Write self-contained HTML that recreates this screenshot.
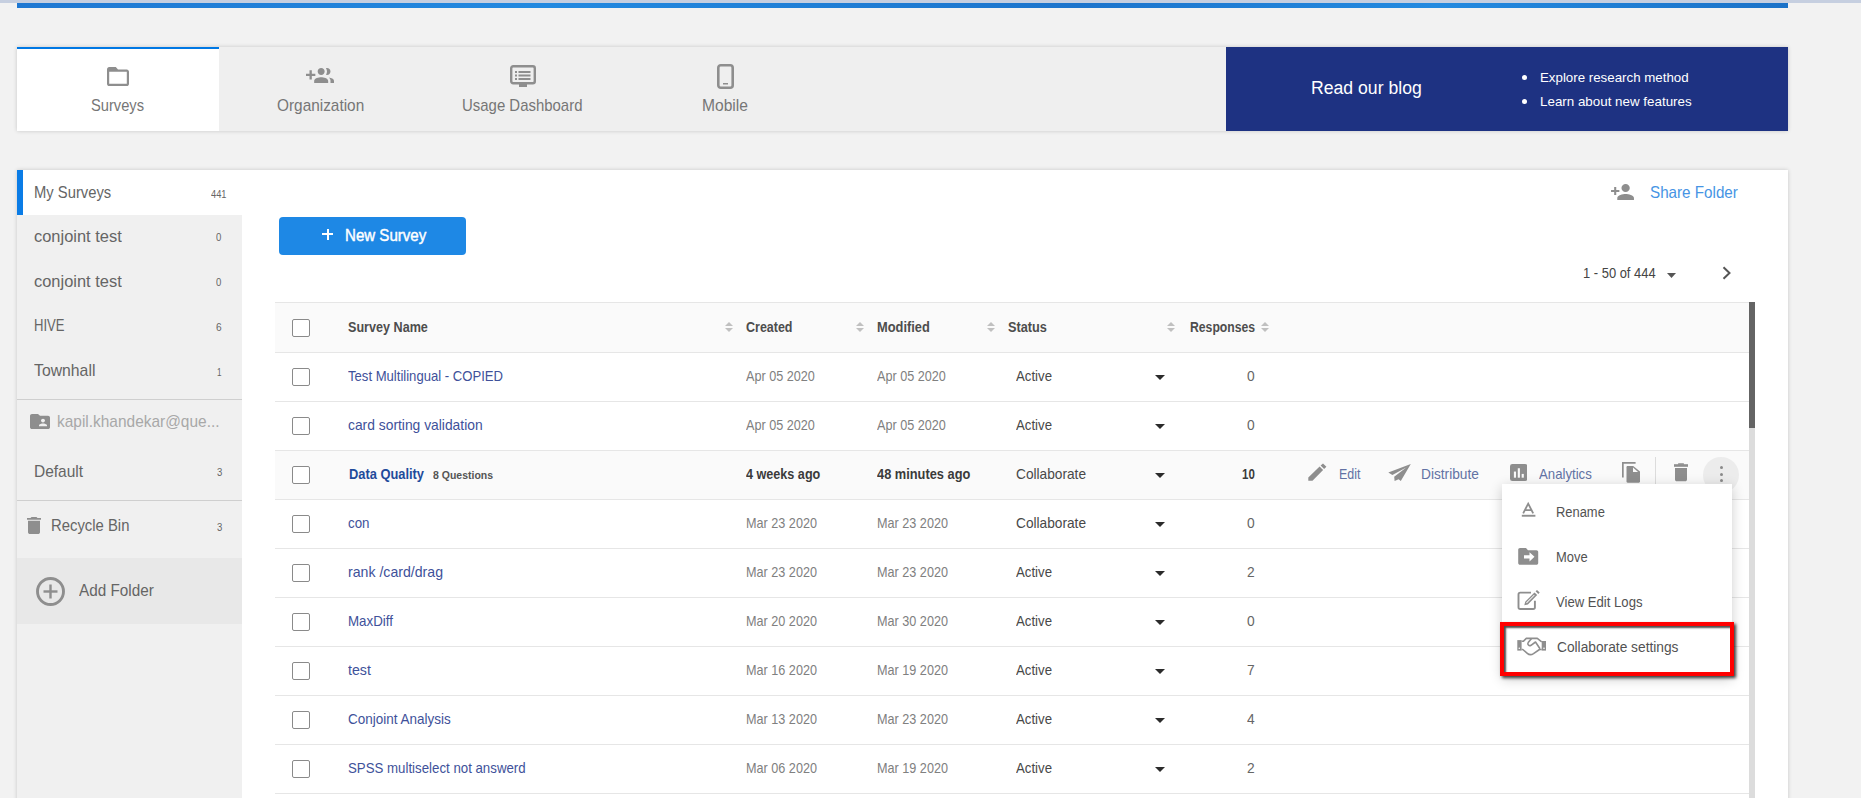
<!DOCTYPE html>
<html><head><meta charset="utf-8"><style>
html,body{margin:0;padding:0;width:1861px;height:798px;overflow:hidden;background:#f2f2f2;font-family:"Liberation Sans",sans-serif}
.t{position:absolute;white-space:nowrap;transform-origin:0 0}
svg{display:block}
</style></head><body>
<div style="position:absolute;left:0px;top:0px;width:1861px;height:3px;background:#c6cfe0"></div>
<div style="position:absolute;left:17px;top:3px;width:1771px;height:5px;background:linear-gradient(90deg,#1f78d2,#2289e0 30%,#1c74cc 60%,#238ae0 80%,#1b72c8)"></div>
<div style="position:absolute;left:17px;top:47px;width:1771px;height:84px;background:#efefef;box-shadow:0 0 4px rgba(0,0,0,.18)"></div>
<div style="position:absolute;left:17px;top:47px;width:202px;height:84px;background:#fff"></div>
<div style="position:absolute;left:17px;top:47px;width:202px;height:2px;background:#0078e4"></div>
<div style="position:absolute;left:1226px;top:47px;width:562px;height:84px;background:#1e3282"></div>
<div style="position:absolute;left:17px;top:170px;width:1771px;height:660px;background:#fff;box-shadow:0 0 4px rgba(0,0,0,.18)"></div>
<div style="position:absolute;left:17px;top:170px;width:225px;height:660px;background:#f0f0f0"></div>
<div style="position:absolute;left:17px;top:170px;width:225px;height:45px;background:#fff"></div>
<div style="position:absolute;left:17px;top:170px;width:6px;height:45px;background:#0a7ce6"></div>
<div style="position:absolute;left:17px;top:399px;width:225px;height:1px;background:#cfcfcf"></div>
<div style="position:absolute;left:17px;top:500px;width:225px;height:1px;background:#cfcfcf"></div>
<div style="position:absolute;left:17px;top:558px;width:225px;height:66px;background:#e8e8e8"></div>
<svg style="position:absolute;left:107px;top:67px;" width="22" height="19" viewBox="2 4 20 16" preserveAspectRatio="none"><path fill="#8e8e8e" d="M20 6h-8l-2-2H4c-1.1 0-1.99.9-1.99 2L2 18c0 1.1.9 2 2 2h16c1.1 0 2-.9 2-2V8c0-1.1-.9-2-2-2zm0 12H4V8h16v10z"/></svg>
<svg style="position:absolute;left:306px;top:68px;" width="28" height="15" viewBox="0 5 24 13" preserveAspectRatio="none"><path fill="#8e8e8e" d="M8 10H5V7H3v3H0v2h3v3h2v-3h3v-2zm10 1c1.66 0 2.99-1.34 2.99-3S19.66 5 18 5c-.32 0-.63.05-.91.14.57.81.9 1.79.9 2.86s-.34 2.04-.9 2.86c.28.09.59.14.91.14zm-5 0c1.66 0 2.99-1.34 2.99-3S14.66 5 13 5c-1.66 0-3 1.34-3 3s1.34 3 3 3zm6.62 2.16c.83.73 1.38 1.66 1.38 2.84v2h3v-2c0-1.54-2.37-2.49-4.38-2.84zM13 13c-2 0-6 1-6 3v2h12v-2c0-2-4-3-6-3z"/></svg>
<svg style="position:absolute;left:510px;top:65px;" width="26" height="23" viewBox="0 0 26 23" preserveAspectRatio="none"><rect x="1.2" y="1.2" width="23.6" height="17" rx="2" fill="none" stroke="#8e8e8e" stroke-width="2.4"/><rect x="9" y="19" width="8" height="3" fill="#8e8e8e"/><rect x="5" y="6" width="2" height="2" fill="#8e8e8e"/><rect x="8.5" y="6" width="12" height="2" fill="#8e8e8e"/><rect x="5" y="9.5" width="2" height="2" fill="#8e8e8e"/><rect x="8.5" y="9.5" width="12" height="2" fill="#8e8e8e"/><rect x="5" y="13" width="2" height="2" fill="#8e8e8e"/><rect x="8.5" y="13" width="12" height="2" fill="#8e8e8e"/></svg>
<svg style="position:absolute;left:717px;top:64px;" width="17" height="25" viewBox="0 0 17 25" preserveAspectRatio="none"><rect x="1.3" y="1.3" width="14.4" height="22.4" rx="2.5" fill="none" stroke="#8e8e8e" stroke-width="2.6"/><rect x="6" y="19" width="5" height="1.5" fill="#8e8e8e"/></svg>
<div class="t" style="left:91.40px;top:96.00px;font-size:17px;line-height:19px;color:#767676;transform:scaleX(0.8632);">Surveys</div>
<div class="t" style="left:276.50px;top:96.00px;font-size:17px;line-height:19px;color:#767676;transform:scaleX(0.9046);">Organization</div>
<div class="t" style="left:462.00px;top:96.00px;font-size:17px;line-height:19px;color:#767676;transform:scaleX(0.8792);">Usage Dashboard</div>
<div class="t" style="left:702.00px;top:96.00px;font-size:17px;line-height:19px;color:#767676;transform:scaleX(0.9182);">Mobile</div>
<div class="t" style="left:1310.50px;top:78.00px;font-size:18px;line-height:20px;color:#fff;transform:scaleX(0.9797);">Read our blog</div>
<div class="t" style="left:1539.60px;top:70.00px;font-size:13px;line-height:15px;color:#fff;transform:scaleX(1.0231);">Explore research method</div>
<div class="t" style="left:1539.60px;top:94.00px;font-size:13px;line-height:15px;color:#fff;transform:scaleX(1.0288);">Learn about new features</div>
<div style="position:absolute;left:1522px;top:75px;width:5px;height:5px;background:#fff;border-radius:50%"></div>
<div style="position:absolute;left:1522px;top:99px;width:5px;height:5px;background:#fff;border-radius:50%"></div>
<div class="t" style="left:33.80px;top:183.30px;font-size:17px;line-height:19px;color:#656565;transform:scaleX(0.8694);">My Surveys</div>
<div class="t" style="left:211.30px;top:187.50px;font-size:11.5px;line-height:12px;color:#656565;transform:scaleX(0.8073);">441</div>
<div class="t" style="left:33.80px;top:227.00px;font-size:17px;line-height:19px;color:#656565;transform:scaleX(0.9669);">conjoint test</div>
<div class="t" style="left:216.20px;top:232.00px;font-size:10px;line-height:11px;color:#656565;transform:scaleX(0.9550);">0</div>
<div class="t" style="left:33.80px;top:272.00px;font-size:17px;line-height:19px;color:#656565;transform:scaleX(0.9669);">conjoint test</div>
<div class="t" style="left:216.20px;top:277.00px;font-size:10px;line-height:11px;color:#656565;transform:scaleX(0.9550);">0</div>
<div class="t" style="left:34.30px;top:316.10px;font-size:17px;line-height:19px;color:#656565;transform:scaleX(0.7683);">HIVE</div>
<div class="t" style="left:216.20px;top:321.50px;font-size:10px;line-height:11px;color:#656565;transform:scaleX(1.0090);">6</div>
<div class="t" style="left:33.80px;top:361.00px;font-size:17px;line-height:19px;color:#656565;transform:scaleX(0.9282);">Townhall</div>
<div class="t" style="left:216.50px;top:366.50px;font-size:10px;line-height:11px;color:#656565;transform:scaleX(0.8108);">1</div>
<svg style="position:absolute;left:29.5px;top:413px;" width="20" height="17" viewBox="2 3 20 18" preserveAspectRatio="none"><path fill="#8e8e8e" d="M20 6h-8l-2-2H4c-1.1 0-1.99.9-1.99 2L2 18c0 1.1.9 2 2 2h16c1.1 0 2-.9 2-2V8c0-1.1-.9-2-2-2zm-5 3c1.1 0 2 .9 2 2s-.9 2-2 2-2-.9-2-2 .9-2 2-2zm4 8h-8v-1c0-1.33 2.67-2 4-2s4 .67 4 2v1z"/></svg>
<div class="t" style="left:56.50px;top:412.20px;font-size:17px;line-height:19px;color:#a8a8a8;transform:scaleX(0.9086);">kapil.khandekar@que...</div>
<div class="t" style="left:34.40px;top:461.80px;font-size:17px;line-height:19px;color:#656565;transform:scaleX(0.9118);">Default</div>
<div class="t" style="left:216.50px;top:467.00px;font-size:10px;line-height:11px;color:#656565;transform:scaleX(0.9550);">3</div>
<svg style="position:absolute;left:25px;top:516px;" width="18" height="19" viewBox="3 2 18 20" preserveAspectRatio="none"><path fill="#8e8e8e" d="M6 19c0 1.1.9 2 2 2h8c1.1 0 2-.9 2-2V7H6v12zM19 4h-3.5l-1-1h-5l-1 1H5v2h14V4z"/></svg>
<div class="t" style="left:51.20px;top:515.70px;font-size:17px;line-height:19px;color:#656565;transform:scaleX(0.8735);">Recycle Bin</div>
<div class="t" style="left:216.50px;top:522.00px;font-size:10px;line-height:11px;color:#656565;transform:scaleX(0.9550);">3</div>
<svg style="position:absolute;left:36px;top:577px;" width="29" height="29" viewBox="0 0 29 29" preserveAspectRatio="none"><circle cx="14.5" cy="14.5" r="13" fill="none" stroke="#8e8e8e" stroke-width="2.9"/><rect x="13.3" y="7.5" width="2.4" height="14" fill="#8e8e8e"/><rect x="7.5" y="13.3" width="14" height="2.4" fill="#8e8e8e"/></svg>
<div class="t" style="left:79.00px;top:581.00px;font-size:17px;line-height:19px;color:#656565;transform:scaleX(0.8996);">Add Folder</div>
<svg style="position:absolute;left:1610px;top:183px;" width="25" height="18" viewBox="0 3 24 18" preserveAspectRatio="none"><path fill="#8e8e8e" d="M15 12c2.21 0 4-1.79 4-4s-1.79-4-4-4-4 1.79-4 4 1.79 4 4 4zm-9-2V7H4v3H1v2h3v3h2v-3h3v-2H6zm9 4c-2.67 0-8 1.34-8 4v2h16v-2c0-2.66-5.33-4-8-4z"/></svg>
<div class="t" style="left:1650.00px;top:182.80px;font-size:16.5px;line-height:18px;color:#4694e4;transform:scaleX(0.9214);">Share Folder</div>
<div style="position:absolute;left:279px;top:217px;width:187px;height:38px;background:#1e88e5;border-radius:4px"></div>
<div style="position:absolute;left:322px;top:233px;width:11px;height:2px;background:#fff"></div>
<div style="position:absolute;left:326.5px;top:228.5px;width:2px;height:11px;background:#fff"></div>
<div class="t" style="left:345.00px;top:226.00px;font-size:17px;line-height:19px;color:#fff;transform:scaleX(0.8871);-webkit-text-stroke:0.45px #fff;">New Survey</div>
<div class="t" style="left:1582.70px;top:264.60px;font-size:14px;line-height:16px;color:#444;transform:scaleX(0.9237);">1 - 50 of 444</div>
<svg style="position:absolute;left:1667px;top:273px;" width="9" height="5" viewBox="0 0 9 5" preserveAspectRatio="none"><path d="M0 0h9L4.5 5z" fill="#555"/></svg>
<svg style="position:absolute;left:1721px;top:266px;" width="12" height="14" viewBox="0 0 12 14" preserveAspectRatio="none"><path d="M2.5 1.2l6 5.8-6 5.8" fill="none" stroke="#555" stroke-width="2"/></svg>
<div style="position:absolute;left:275px;top:302px;width:1474px;height:50px;background:#fafafa;border-top:1px solid #e6e6e6;box-sizing:border-box"></div>
<div style="position:absolute;left:275px;top:352px;width:1474px;height:1px;background:#e6e6e6"></div>
<div style="position:absolute;left:275px;top:401px;width:1474px;height:1px;background:#e6e6e6"></div>
<div style="position:absolute;left:275px;top:450px;width:1474px;height:1px;background:#e6e6e6"></div>
<div style="position:absolute;left:275px;top:499px;width:1474px;height:1px;background:#e6e6e6"></div>
<div style="position:absolute;left:275px;top:548px;width:1474px;height:1px;background:#e6e6e6"></div>
<div style="position:absolute;left:275px;top:597px;width:1474px;height:1px;background:#e6e6e6"></div>
<div style="position:absolute;left:275px;top:646px;width:1474px;height:1px;background:#e6e6e6"></div>
<div style="position:absolute;left:275px;top:695px;width:1474px;height:1px;background:#e6e6e6"></div>
<div style="position:absolute;left:275px;top:744px;width:1474px;height:1px;background:#e6e6e6"></div>
<div style="position:absolute;left:275px;top:793px;width:1474px;height:1px;background:#e6e6e6"></div>
<div style="position:absolute;left:275px;top:451px;width:1474px;height:48px;background:#fafafa"></div>
<div style="position:absolute;left:1749px;top:302px;width:5.5px;height:500px;background:#dcdcdc"></div>
<div style="position:absolute;left:1749px;top:302px;width:5.5px;height:126px;background:#646464"></div>
<div style="position:absolute;left:292px;top:319px;width:18px;height:18px;border:1.4px solid #8a8a8a;border-radius:2px;box-sizing:border-box;background:#fff"></div>
<div class="t" style="left:348.00px;top:319.10px;font-size:14.5px;line-height:16px;color:#4d4d4d;font-weight:bold;transform:scaleX(0.8694);">Survey Name</div>
<div class="t" style="left:746.30px;top:319.10px;font-size:14.5px;line-height:16px;color:#4d4d4d;font-weight:bold;transform:scaleX(0.8611);">Created</div>
<div class="t" style="left:877.40px;top:319.10px;font-size:14.5px;line-height:16px;color:#4d4d4d;font-weight:bold;transform:scaleX(0.8859);">Modified</div>
<div class="t" style="left:1008.20px;top:319.10px;font-size:14.5px;line-height:16px;color:#4d4d4d;font-weight:bold;transform:scaleX(0.8781);">Status</div>
<div class="t" style="left:1189.60px;top:319.10px;font-size:14.5px;line-height:16px;color:#4d4d4d;font-weight:bold;transform:scaleX(0.8416);">Responses</div>
<svg style="position:absolute;left:725px;top:322px;" width="8" height="10" viewBox="0 0 8 10" preserveAspectRatio="none"><path d="M0 4L4 0 8 4z M0 6h8L4 10z" fill="#c0c0c0"/></svg>
<svg style="position:absolute;left:855.5px;top:322px;" width="8" height="10" viewBox="0 0 8 10" preserveAspectRatio="none"><path d="M0 4L4 0 8 4z M0 6h8L4 10z" fill="#c0c0c0"/></svg>
<svg style="position:absolute;left:986.5px;top:322px;" width="8" height="10" viewBox="0 0 8 10" preserveAspectRatio="none"><path d="M0 4L4 0 8 4z M0 6h8L4 10z" fill="#c0c0c0"/></svg>
<svg style="position:absolute;left:1166.7px;top:322px;" width="8" height="10" viewBox="0 0 8 10" preserveAspectRatio="none"><path d="M0 4L4 0 8 4z M0 6h8L4 10z" fill="#c0c0c0"/></svg>
<svg style="position:absolute;left:1260.8px;top:322px;" width="8" height="10" viewBox="0 0 8 10" preserveAspectRatio="none"><path d="M0 4L4 0 8 4z M0 6h8L4 10z" fill="#c0c0c0"/></svg>
<div style="position:absolute;left:292px;top:368px;width:18px;height:18px;border:1.4px solid #8a8a8a;border-radius:2px;box-sizing:border-box;background:#fff"></div>
<svg style="position:absolute;left:1155px;top:374.5px;" width="10" height="5" viewBox="0 0 10 5" preserveAspectRatio="none"><path d="M0 0h10L5 5z" fill="#2b2b2b"/></svg>
<div class="t" style="left:348.00px;top:367.00px;font-size:15px;line-height:17px;color:#40519a;transform:scaleX(0.8730);">Test Multilingual - COPIED</div>
<div class="t" style="left:746.30px;top:367.00px;font-size:15px;line-height:17px;color:#808080;transform:scaleX(0.8428);">Apr 05 2020</div>
<div class="t" style="left:877.40px;top:367.00px;font-size:15px;line-height:17px;color:#808080;transform:scaleX(0.8428);">Apr 05 2020</div>
<div class="t" style="left:1016.20px;top:367.00px;font-size:15px;line-height:17px;color:#484848;transform:scaleX(0.8813);">Active</div>
<div class="t" style="left:1246.72px;top:367.00px;font-size:15px;line-height:17px;color:#666;transform:scaleX(0.9200);">0</div>
<div style="position:absolute;left:292px;top:417px;width:18px;height:18px;border:1.4px solid #8a8a8a;border-radius:2px;box-sizing:border-box;background:#fff"></div>
<svg style="position:absolute;left:1155px;top:423.5px;" width="10" height="5" viewBox="0 0 10 5" preserveAspectRatio="none"><path d="M0 0h10L5 5z" fill="#2b2b2b"/></svg>
<div class="t" style="left:348.00px;top:416.00px;font-size:15px;line-height:17px;color:#40519a;transform:scaleX(0.9225);">card sorting validation</div>
<div class="t" style="left:746.30px;top:416.00px;font-size:15px;line-height:17px;color:#808080;transform:scaleX(0.8428);">Apr 05 2020</div>
<div class="t" style="left:877.40px;top:416.00px;font-size:15px;line-height:17px;color:#808080;transform:scaleX(0.8428);">Apr 05 2020</div>
<div class="t" style="left:1016.20px;top:416.00px;font-size:15px;line-height:17px;color:#484848;transform:scaleX(0.8813);">Active</div>
<div class="t" style="left:1246.72px;top:416.00px;font-size:15px;line-height:17px;color:#666;transform:scaleX(0.9200);">0</div>
<div style="position:absolute;left:292px;top:466px;width:18px;height:18px;border:1.4px solid #8a8a8a;border-radius:2px;box-sizing:border-box;background:#fff"></div>
<svg style="position:absolute;left:1155px;top:472.5px;" width="10" height="5" viewBox="0 0 10 5" preserveAspectRatio="none"><path d="M0 0h10L5 5z" fill="#2b2b2b"/></svg>
<div style="position:absolute;left:292px;top:515px;width:18px;height:18px;border:1.4px solid #8a8a8a;border-radius:2px;box-sizing:border-box;background:#fff"></div>
<svg style="position:absolute;left:1155px;top:521.5px;" width="10" height="5" viewBox="0 0 10 5" preserveAspectRatio="none"><path d="M0 0h10L5 5z" fill="#2b2b2b"/></svg>
<div class="t" style="left:348.00px;top:514.00px;font-size:15px;line-height:17px;color:#40519a;transform:scaleX(0.8884);">con</div>
<div class="t" style="left:746.30px;top:514.00px;font-size:15px;line-height:17px;color:#808080;transform:scaleX(0.8428);">Mar 23 2020</div>
<div class="t" style="left:877.40px;top:514.00px;font-size:15px;line-height:17px;color:#808080;transform:scaleX(0.8428);">Mar 23 2020</div>
<div class="t" style="left:1016.20px;top:514.00px;font-size:15px;line-height:17px;color:#484848;transform:scaleX(0.9126);">Collaborate</div>
<div class="t" style="left:1246.72px;top:514.00px;font-size:15px;line-height:17px;color:#666;transform:scaleX(0.9200);">0</div>
<div style="position:absolute;left:292px;top:564px;width:18px;height:18px;border:1.4px solid #8a8a8a;border-radius:2px;box-sizing:border-box;background:#fff"></div>
<svg style="position:absolute;left:1155px;top:570.5px;" width="10" height="5" viewBox="0 0 10 5" preserveAspectRatio="none"><path d="M0 0h10L5 5z" fill="#2b2b2b"/></svg>
<div class="t" style="left:348.00px;top:563.00px;font-size:15px;line-height:17px;color:#40519a;transform:scaleX(0.9415);">rank /card/drag</div>
<div class="t" style="left:746.30px;top:563.00px;font-size:15px;line-height:17px;color:#808080;transform:scaleX(0.8428);">Mar 23 2020</div>
<div class="t" style="left:877.40px;top:563.00px;font-size:15px;line-height:17px;color:#808080;transform:scaleX(0.8428);">Mar 23 2020</div>
<div class="t" style="left:1016.20px;top:563.00px;font-size:15px;line-height:17px;color:#484848;transform:scaleX(0.8813);">Active</div>
<div class="t" style="left:1246.72px;top:563.00px;font-size:15px;line-height:17px;color:#666;transform:scaleX(0.9200);">2</div>
<div style="position:absolute;left:292px;top:613px;width:18px;height:18px;border:1.4px solid #8a8a8a;border-radius:2px;box-sizing:border-box;background:#fff"></div>
<svg style="position:absolute;left:1155px;top:619.5px;" width="10" height="5" viewBox="0 0 10 5" preserveAspectRatio="none"><path d="M0 0h10L5 5z" fill="#2b2b2b"/></svg>
<div class="t" style="left:348.00px;top:612.00px;font-size:15px;line-height:17px;color:#40519a;transform:scaleX(0.8893);">MaxDiff</div>
<div class="t" style="left:746.30px;top:612.00px;font-size:15px;line-height:17px;color:#808080;transform:scaleX(0.8428);">Mar 20 2020</div>
<div class="t" style="left:877.40px;top:612.00px;font-size:15px;line-height:17px;color:#808080;transform:scaleX(0.8428);">Mar 30 2020</div>
<div class="t" style="left:1016.20px;top:612.00px;font-size:15px;line-height:17px;color:#484848;transform:scaleX(0.8813);">Active</div>
<div class="t" style="left:1246.72px;top:612.00px;font-size:15px;line-height:17px;color:#666;transform:scaleX(0.9200);">0</div>
<div style="position:absolute;left:292px;top:662px;width:18px;height:18px;border:1.4px solid #8a8a8a;border-radius:2px;box-sizing:border-box;background:#fff"></div>
<svg style="position:absolute;left:1155px;top:668.5px;" width="10" height="5" viewBox="0 0 10 5" preserveAspectRatio="none"><path d="M0 0h10L5 5z" fill="#2b2b2b"/></svg>
<div class="t" style="left:348.00px;top:661.00px;font-size:15px;line-height:17px;color:#40519a;transform:scaleX(0.9463);">test</div>
<div class="t" style="left:746.30px;top:661.00px;font-size:15px;line-height:17px;color:#808080;transform:scaleX(0.8428);">Mar 16 2020</div>
<div class="t" style="left:877.40px;top:661.00px;font-size:15px;line-height:17px;color:#808080;transform:scaleX(0.8428);">Mar 19 2020</div>
<div class="t" style="left:1016.20px;top:661.00px;font-size:15px;line-height:17px;color:#484848;transform:scaleX(0.8813);">Active</div>
<div class="t" style="left:1246.72px;top:661.00px;font-size:15px;line-height:17px;color:#666;transform:scaleX(0.9200);">7</div>
<div style="position:absolute;left:292px;top:711px;width:18px;height:18px;border:1.4px solid #8a8a8a;border-radius:2px;box-sizing:border-box;background:#fff"></div>
<svg style="position:absolute;left:1155px;top:717.5px;" width="10" height="5" viewBox="0 0 10 5" preserveAspectRatio="none"><path d="M0 0h10L5 5z" fill="#2b2b2b"/></svg>
<div class="t" style="left:348.00px;top:710.00px;font-size:15px;line-height:17px;color:#40519a;transform:scaleX(0.8989);">Conjoint Analysis</div>
<div class="t" style="left:746.30px;top:710.00px;font-size:15px;line-height:17px;color:#808080;transform:scaleX(0.8428);">Mar 13 2020</div>
<div class="t" style="left:877.40px;top:710.00px;font-size:15px;line-height:17px;color:#808080;transform:scaleX(0.8428);">Mar 23 2020</div>
<div class="t" style="left:1016.20px;top:710.00px;font-size:15px;line-height:17px;color:#484848;transform:scaleX(0.8813);">Active</div>
<div class="t" style="left:1246.72px;top:710.00px;font-size:15px;line-height:17px;color:#666;transform:scaleX(0.9200);">4</div>
<div style="position:absolute;left:292px;top:760px;width:18px;height:18px;border:1.4px solid #8a8a8a;border-radius:2px;box-sizing:border-box;background:#fff"></div>
<svg style="position:absolute;left:1155px;top:766.5px;" width="10" height="5" viewBox="0 0 10 5" preserveAspectRatio="none"><path d="M0 0h10L5 5z" fill="#2b2b2b"/></svg>
<div class="t" style="left:348.00px;top:759.00px;font-size:15px;line-height:17px;color:#40519a;transform:scaleX(0.8840);">SPSS multiselect not answerd</div>
<div class="t" style="left:746.30px;top:759.00px;font-size:15px;line-height:17px;color:#808080;transform:scaleX(0.8428);">Mar 06 2020</div>
<div class="t" style="left:877.40px;top:759.00px;font-size:15px;line-height:17px;color:#808080;transform:scaleX(0.8428);">Mar 19 2020</div>
<div class="t" style="left:1016.20px;top:759.00px;font-size:15px;line-height:17px;color:#484848;transform:scaleX(0.8813);">Active</div>
<div class="t" style="left:1246.72px;top:759.00px;font-size:15px;line-height:17px;color:#666;transform:scaleX(0.9200);">2</div>
<div class="t" style="left:348.50px;top:465.00px;font-size:15px;line-height:17px;color:#1f4b9b;font-weight:bold;transform:scaleX(0.8571);">Data Quality</div>
<div class="t" style="left:432.90px;top:469.00px;font-size:11.5px;line-height:12px;color:#555;font-weight:bold;transform:scaleX(0.9127);">8 Questions</div>
<div class="t" style="left:746.00px;top:465.00px;font-size:15px;line-height:17px;color:#3b3b3b;font-weight:bold;transform:scaleX(0.8405);">4 weeks ago</div>
<div class="t" style="left:877.00px;top:465.00px;font-size:15px;line-height:17px;color:#3b3b3b;font-weight:bold;transform:scaleX(0.8544);">48 minutes ago</div>
<div class="t" style="left:1016.20px;top:465.00px;font-size:15px;line-height:17px;color:#484848;transform:scaleX(0.9126);">Collaborate</div>
<div class="t" style="left:1242.00px;top:465.00px;font-size:15px;line-height:17px;color:#3b3b3b;font-weight:bold;transform:scaleX(0.7665);">10</div>
<svg style="position:absolute;left:1302px;top:458px;" width="30" height="30" viewBox="0 0 30 30" preserveAspectRatio="none"><path fill="#8e8e8e" d="M6.3 19.4L17.6 8.6 21.1 12.1 10.5 22.8H6.3z M18.6 7.5L21 5.4 24.4 8.8 22.1 11z"/></svg>
<div class="t" style="left:1338.50px;top:465.00px;font-size:15px;line-height:17px;color:#6272a4;transform:scaleX(0.8317);">Edit</div>
<svg style="position:absolute;left:1385px;top:458px;" width="30" height="30" viewBox="0 0 30 30" preserveAspectRatio="none"><path fill="#8e8e8e" d="M3.3 14.5L25.8 6 20.8 9.7 7.4 17z M9.2 18.8L25.8 6 15.8 23 13.6 21.2 9.6 23z"/></svg>
<div class="t" style="left:1420.80px;top:465.00px;font-size:15px;line-height:17px;color:#6272a4;transform:scaleX(0.9140);">Distribute</div>
<svg style="position:absolute;left:1509.7px;top:464px;" width="17.5" height="17" viewBox="0 0 18 18" preserveAspectRatio="none"><rect width="18" height="18" rx="2.5" fill="#8e8e8e"/><rect x="4" y="8" width="2.2" height="6.5" fill="#fafafa"/><rect x="8" y="4.5" width="2.2" height="10" fill="#fafafa"/><rect x="12" y="10.5" width="2.2" height="4" fill="#fafafa"/></svg>
<div class="t" style="left:1539.00px;top:465.00px;font-size:15px;line-height:17px;color:#6272a4;transform:scaleX(0.8800);">Analytics</div>
<svg style="position:absolute;left:1615px;top:455px;" width="30" height="30" viewBox="0 0 30 30" preserveAspectRatio="none"><path fill="#8e8e8e" d="M7 7h13.6v1.8H8.7V22.6H7z"/><path fill="#8e8e8e" d="M11.5 12.2c0-.7.5-1.2 1.2-1.2H18.2l6.8 5.6V26.5c0 .7-.5 1.2-1.2 1.2H12.7c-.7 0-1.2-.5-1.2-1.2z"/><path fill="#fafafa" d="M18 12.6v4.5h5.1z"/></svg>
<div style="position:absolute;left:1655px;top:457px;width:1px;height:27px;background:#dcdcdc"></div>
<svg style="position:absolute;left:1615px;top:455px;" width="80" height="30" viewBox="0 0 80 30" preserveAspectRatio="none"><rect x="59" y="9.2" width="14" height="2.6" fill="#8e8e8e"/><rect x="63" y="8.3" width="6" height="1.5" rx=".6" fill="#8e8e8e"/><path fill="#8e8e8e" d="M60 13h12v11.5c0 1-.8 1.8-1.8 1.8h-8.4c-1 0-1.8-.8-1.8-1.8z"/></svg>
<div style="position:absolute;left:1703px;top:457px;width:36px;height:36px;background:#ececec;border-radius:50%"></div>
<div style="position:absolute;left:1720px;top:466.0px;width:3px;height:3px;background:#8a8a8a;border-radius:50%"></div>
<div style="position:absolute;left:1720px;top:472.5px;width:3px;height:3px;background:#8a8a8a;border-radius:50%"></div>
<div style="position:absolute;left:1720px;top:479.0px;width:3px;height:3px;background:#8a8a8a;border-radius:50%"></div>
<div style="position:absolute;left:1502px;top:484px;width:230px;height:192px;background:#fff;box-shadow:0 3px 12px rgba(0,0,0,.2)"></div>
<svg style="position:absolute;left:1512px;top:496px;" width="40" height="30" viewBox="0 0 40 30" preserveAspectRatio="none"><path d="M11.2 17.3L16.2 7.6 21.2 17.3 M12.9 14.2h6.6" fill="none" stroke="#8e8e8e" stroke-width="1.8"/><rect x="9.8" y="18.8" width="13.6" height="1.9" fill="#8e8e8e"/></svg>
<div class="t" style="left:1556.40px;top:503.80px;font-size:14px;line-height:16px;color:#525252;transform:scaleX(0.9225);">Rename</div>
<svg style="position:absolute;left:1512px;top:541px;" width="40" height="30" viewBox="0 0 40 30" preserveAspectRatio="none"><path fill="#8e8e8e" d="M8 7h6l2 2.2h8.4c1 0 1.8.8 1.8 1.8v10.9c0 1-.8 1.8-1.8 1.8H8c-1 0-1.8-.8-1.8-1.8V8.8C6.2 7.8 7 7 8 7z"/><path fill="#fff" d="M12 14.2h5.5v-3l5 4.6-5 4.6v-3H12z"/></svg>
<div class="t" style="left:1556.40px;top:548.60px;font-size:14px;line-height:16px;color:#525252;transform:scaleX(0.9226);">Move</div>
<svg style="position:absolute;left:1512px;top:586px;" width="40" height="30" viewBox="0 0 40 30" preserveAspectRatio="none"><path d="M19 6.6H8.3c-1.1 0-1.8.7-1.8 1.8v12.8c0 1.1.7 1.8 1.8 1.8h12.8c1.1 0 1.8-.7 1.8-1.8v-6.5" fill="none" stroke="#8e8e8e" stroke-width="1.9"/><path fill="#8e8e8e" d="M12.3 19.3l.9-3.6 9.3-9.3 2.7 2.7-9.3 9.3z M23.6 5.3l1.4-1.4 2.7 2.7-1.4 1.4z"/><path fill="#fff" d="M14.2 16.6l7.9-7.9.6.6-7.9 7.9z"/></svg>
<div class="t" style="left:1556.40px;top:593.70px;font-size:14px;line-height:16px;color:#525252;transform:scaleX(0.9367);">View Edit Logs</div>
<svg style="position:absolute;left:1512px;top:632px;" width="40" height="30" viewBox="0 0 40 30" preserveAspectRatio="none"><rect x="5.3" y="8.1" width="4.3" height="10.5" fill="#8e8e8e"/><rect x="29.7" y="9" width="4.3" height="9.6" fill="#8e8e8e"/><circle cx="7.3" cy="16.3" r=".8" fill="#fff"/><circle cx="32" cy="16.3" r=".8" fill="#fff"/><path d="M9.6 9.3H11.3L14.3 6.4H25.3L29.7 9.8 M9.6 17.5H10.8L15.3 21.3C17 22.8 19.5 22.9 21.5 21.6L27.5 17.5H29.7" fill="none" stroke="#8e8e8e" stroke-width="1.6" stroke-linejoin="round"/><path d="M19.5 6.6L16.2 10.6C15 12.3 17 14.5 19 13.3L23.5 10 28 16.8" fill="none" stroke="#8e8e8e" stroke-width="1.6" stroke-linejoin="round"/></svg>
<div class="t" style="left:1556.80px;top:638.90px;font-size:14px;line-height:16px;color:#525252;transform:scaleX(0.9818);">Collaborate settings</div>
<div style="position:absolute;left:1500px;top:622px;width:234px;height:54px;border:4px solid #f00;box-sizing:border-box;box-shadow:2px 2px 3px rgba(0,0,0,.75), inset 2px 2px 2px rgba(0,0,0,.7)"></div>
</body></html>
